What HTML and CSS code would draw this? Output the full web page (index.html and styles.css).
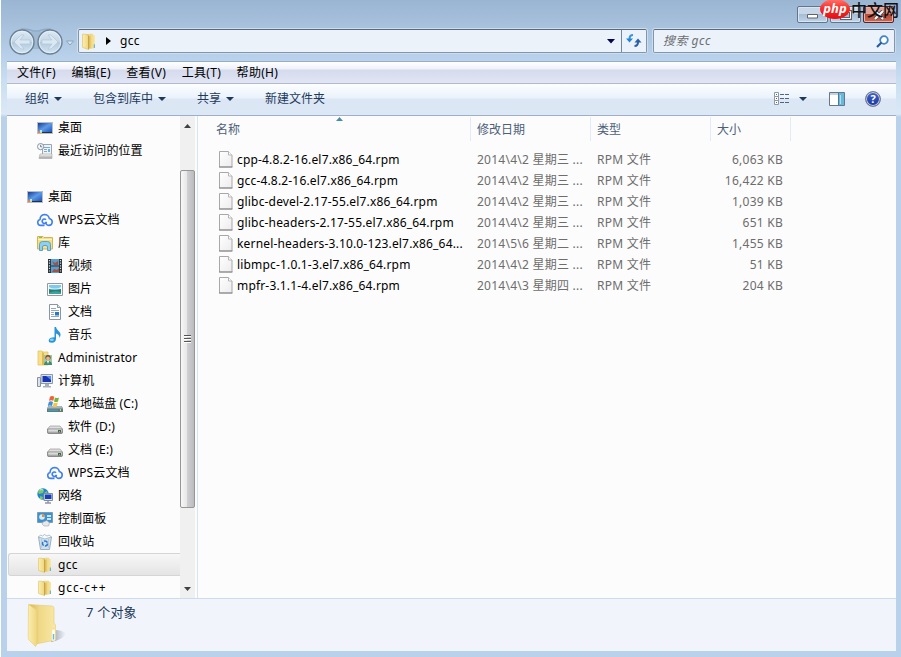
FILE: index.html
```
<!DOCTYPE html>
<html lang="zh-CN">
<head>
    <meta charset="UTF-8">
    <title>gcc</title>
    <link rel="stylesheet" href="styles.css">
</head>
<body>
    <!-- 图标 -->
    <svg class="defs" width="0" height="0">
        <defs>
            <linearGradient id="gold" x1="0" x2="1"><stop offset="0" stop-color="#d9b650"/><stop offset=".4" stop-color="#f0d887"/><stop offset="1" stop-color="#f8e9a6"/></linearGradient>
            <linearGradient id="flap" x1="0" x2="1"><stop offset="0" stop-color="#fbeeb0"/><stop offset="1" stop-color="#efd67e"/></linearGradient>
            <linearGradient id="screen" x1="0" y1="0" x2="1" y2="1"><stop offset="0" stop-color="#143c93"/><stop offset=".5" stop-color="#5d9ae8"/><stop offset="1" stop-color="#1d55ba"/></linearGradient>
            <linearGradient id="glass" x1="0" x2="0" y1="0" y2="1"><stop offset="0" stop-color="#dfeaf3"/><stop offset=".48" stop-color="#c4d6e6"/><stop offset=".52" stop-color="#b3cade"/><stop offset="1" stop-color="#d3e5f3"/></linearGradient>
            <linearGradient id="metal" x1="0" x2="0" y1="0" y2="1"><stop offset="0" stop-color="#fafafa"/><stop offset="1" stop-color="#a0a0a0"/></linearGradient>
            <linearGradient id="paper" x1="0" x2="1" y1="0" y2="1"><stop offset="0" stop-color="#fff"/><stop offset="1" stop-color="#ececec"/></linearGradient>
        </defs>
        <symbol id="desktop" viewBox="0 0 16 16">
            <path d="M0 2h16v12H0z" fill="#b8bec6"/><path d="M1 3h14v9H1z" fill="url(#screen)"/><path d="M5 12h10v1H5z" fill="#27313d"/>
            <path d="M1 11h2v2H1z" fill="#ee7d3e"/><path d="M3 10h2v2H3z" fill="#a9eaff"/><path d="M3 12h2v1H3z" fill="#e7d35f"/>
        </symbol>
        <symbol id="recent" viewBox="0 0 16 16">
            <path d="M5.500 1.500h9v10h-9z" fill="#eef3f7" stroke="#9ba6af"/><path d="M7 4.500h6M7 6.500h3M7 8.500h3" stroke="#82a9c9"/><path d="M11 6h2v3h-2z" fill="#6fb4dd"/>
            <path d="M3 11h12v4.500H2z" fill="url(#metal)" stroke="#aaa" stroke-width=".6"/><circle cx="3.600" cy="3.600" r="3.100" fill="#f7fafc" stroke="#8695a3"/><path d="M3.600 1.800v2h1.600" stroke="#546270" fill="none" stroke-width=".8"/>
        </symbol>
        <symbol id="cloud" viewBox="0 0 16 16">
            <path d="M9.500 9.800A2.200 2.200 0 1 1 9 7.800M7.500 13.400H3.800A3 3 0 0 1 3 7.500Q3.200 3 7.400 2.500q4 0 5 4.100 2.900.9 2.800 3.600-.3 3.200-3.400 3.200-1.600 0-2.600-1.600L8 10.200" fill="none" stroke="#3f80ee" stroke-width="1.600"/>
        </symbol>
        <symbol id="library" viewBox="0 0 16 16">
            <path d="M.500 1.500h5.500l1 1h8.500v11.500H.500z" fill="#f7df87" stroke="#d6b351"/><path d="M2 2h3v1H2z" fill="#7bc25b"/><path d="M1 4.500h14" stroke="#fff3be"/>
            <path d="M2.500 15.500v-6q0-3 3-3h5q3 0 3 3v6h-3V12q0-1.500-1.500-1.500H7q-1.500 0-1.500 1.500v3.500z" fill="#8fd0f0" stroke="#4a9bc8" stroke-width=".9"/>
        </symbol>
        <symbol id="video" viewBox="0 0 16 16">
            <path d="M1 1h14v14H1z" fill="#2c3133"/><path d="M4 1h8v6.500H4zM4 8.500h8V15H4z" fill="#569fd5"/><path d="M5 3l3 2 3-2v4H7zM5 14l2-3 3 1 2-2v4z" fill="#a4513e"/>
            <path d="M2.500 2v13M13.500 2v13" stroke="#d9e0e0" stroke-width="1.200" stroke-dasharray="1.200 1.400"/>
        </symbol>
        <symbol id="picture" viewBox="0 0 16 16">
            <path d="M.5 2.500h15v12H.5z" fill="#fff" stroke="#939a9f"/><path d="M2 4h12v9H2z" fill="#7fc9ec"/><path d="M2 6q6 3 12 0v2H2z" fill="#d8f1f7"/><path d="M2 8q5 2 12 0v5H2z" fill="#2c806f"/><path d="M2 12q6-3 12-.5V13H2z" fill="#3aa5a0"/>
        </symbol>
        <symbol id="document" viewBox="0 0 16 16">
            <path d="M2.500.5h8l3 3v12h-11z" fill="#fff" stroke="#8996a5"/><path d="M10.500.5v3h3" fill="#dce6ef" stroke="#8996a5"/><path d="M4 4.500h5M4 6.500h8M4 8.500h3M4 10.500h3M4 12.500h8" stroke="#93a9c2"/><path d="M8 8h4v3.500H8z" fill="#2878c5"/>
        </symbol>
        <symbol id="music" viewBox="0 0 16 16">
            <path d="M7.500 0H9q.3 2.500 3 4.500 2.800 2.300.5 6.500.2-3.500-3.500-4.500v5.500q-.2 3.500-4.200 3.700-3.400 0-3.100-2.500.4-3 5.800-3z" fill="#2b94d9"/><ellipse cx="4.800" cy="12.800" rx="2" ry="1.300" fill="#86d4fa"/>
        </symbol>
        <symbol id="folder" viewBox="0 0 16 16">
            <path d="M5.500 1.500l6-.5v12.500l-4 .8z" fill="url(#gold)" stroke="#dfc263" stroke-width=".5"/>
            <path d="M1.500 1.200h3.300L7.500 2.500v13L1.500 13.500z" fill="url(#flap)" stroke="#dfc263" stroke-width=".6"/>
            <path d="M7.500 2.500v12.800" stroke="#c6a23e" stroke-width=".9"/>
            <path d="M8 3l3.500-1.500 2.500.5v12l-3.500.8L8 14.500z" fill="url(#gold)"/>
            <path d="M13.300 10.500v3.500" stroke="#58a9d8"/>
        </symbol>
        <symbol id="user" viewBox="0 0 16 16">
            <path d="M1 1h4l1 1h5v13H1z" fill="#f7df87" stroke="#dfbf60" stroke-width=".7"/><path d="M5 2l2 1v12H5z" fill="#ddb955"/>
            <path d="M7 5h8v10H7z" fill="#a4c8a5"/><circle cx="11" cy="7.500" r="2.600" fill="#6b4d34"/><circle cx="11" cy="8.500" r="1.900" fill="#e5b28a"/><path d="M7 15q0-4 4-4t4 4z" fill="#408c70"/><path d="M10 11h2l-1 3z" fill="#fff"/>
        </symbol>
        <symbol id="computer" viewBox="0 0 16 16">
            <path d="M.5 4.500h3v9h-3z" fill="#dde2e9" stroke="#8692a1"/><path d="M4 1.500h11.500v9H4z" fill="#dbe2eb" stroke="#8d99a9"/><path d="M5.500 3h8.500v6H5.500z" fill="#1833b0"/><path d="M9 3h5v4z" fill="#5c89ee"/><path d="M8 11h4v2h2v1.500H6V13h2z" fill="#a6afba"/>
        </symbol>
        <symbol id="sysdisk" viewBox="0 0 16 16">
            <path d="M1.500 10h13l1.500 2.500v3.500H0v-3.500z" fill="#6b7780"/><path d="M1.500 10h13l1.500 2.500H0z" fill="#a6b6c0"/><path d="M1 13.500h10V15H1z" fill="#38a2ae"/><path d="M13 13h1v2h-1z" fill="#8cf75e"/>
            <path d="M3 .8q2-1.500 4.300 0L6.300 4.800q-2-1.300-4.300 0z" fill="#ee6337"/><path d="M8 1.500q2 1 4 0l-1 4q-2 1-4 0z" fill="#72b43f"/><path d="M1.800 6q2-1.300 4.200 0L5 10Q3 9 .8 10z" fill="#448fd6"/><path d="M6.800 6.500q2 1 4 0l-1 4q-2 1-4 0z" fill="#fac642"/>
        </symbol>
        <symbol id="disk" viewBox="0 0 16 16">
            <path d="M3 7h10l2.500 3v3.500q0 1-1 1h-13q-1 0-1-1V10z" fill="#dedede" stroke="#999" stroke-width=".7"/><path d="M.700 10h14.600v3.500q0 .8-.8.8h-13q-.8 0-.8-.8z" fill="url(#metal)" stroke="#777" stroke-width=".8"/><path d="M11 11h3v2.500h-3z" fill="#496049"/><path d="M12 12h1v1h-1z" fill="#52ee50"/>
        </symbol>
        <symbol id="network" viewBox="0 0 16 16">
            <circle cx="6" cy="6" r="5.700" fill="#2482d4"/><path d="M2 2q3-2 5 0L6 5 2 6 1 4zM7 5l3-2 1 4-3 3zM3 8l3 1-1 3-2-1z" fill="#77cb63"/><path d="M3 2q2-1 3 0" stroke="#bde8ff" fill="none"/>
            <path d="M7 5.500h8.500v7H7z" fill="#dce4ef" stroke="#808d9c"/><path d="M8 6.500h6.500V11H8z" fill="#173db9"/><path d="M11 13v2M8 15h6" stroke="#8d98a5" stroke-width="1.400"/>
        </symbol>
        <symbol id="control" viewBox="0 0 16 16">
            <path d="M.5 1.500h15v10H.5z" fill="#3c91cf" stroke="#7b9cb7"/><circle cx="5" cy="6" r="2.800" fill="#d3ecff"/><path d="M5 6V3.200A2.800 2.800 0 0 1 7.800 6z" fill="#f28a29"/><path d="M10 5h4M10 8h4" stroke="#fff" stroke-width="1.300"/><path d="M6 11l4-1.500 2.500 2.500-1 3H7l-2-2z" fill="#e8e8e8" stroke="#9ba3a8" stroke-width=".6"/>
        </symbol>
        <symbol id="recycle" viewBox="0 0 16 16">
            <path d="M1.500 3h13l-2 12.500H3.500z" fill="#cfe0ec" stroke="#8aa1b4" stroke-width=".8"/><path d="M1.500 3l2-2 2 1 2-1.500L10 2l2-1 2.500 2-6.500 2z" fill="#f6fafd" stroke="#94aabb" stroke-width=".7"/><path d="M4.500 5v9M11.500 5v9" stroke="#b4cddd"/>
            <circle cx="8" cy="9.500" r="2.500" fill="none" stroke="#2e78d0" stroke-width="1.500" stroke-dasharray="4 1.200"/>
        </symbol>
        <symbol id="file" viewBox="0 0 14 17">
            <path d="M.5.5h9l3.500 3.500v12H.5z" fill="url(#paper)" stroke="#a8a8a8"/><path d="M9.500.5V4H13" fill="#fff" stroke="#b5b5b5"/><path d="M0 16h13.500" stroke="#858585"/>
        </symbol>
    </svg>

    <div class="window">
        <div class="titlebar">
            <div class="caption">
                <span class="cap-btn"><svg width="12" height="5"><path d="M.5.5h10v3.500H.5z" fill="#fff" stroke="#63616f"/></svg></span>
                <span class="cap-btn"><svg width="12" height="10"><path d="M1.500 1.500h9v7h-9z" fill="none" stroke="#63616f" stroke-width="3"/><path d="M1.500 1.500h9v7h-9z" fill="none" stroke="#fff"/></svg></span>
                <span class="cap-btn close"><svg width="12" height="10"><path d="M2 1l8 8M10 1L2 9" stroke="#6b5156" stroke-width="4"/><path d="M2 1l8 8M10 1L2 9" stroke="#fff" stroke-width="2"/></svg></span>
            </div>
            <div class="watermark">
                <span class="php">php</span><span class="cn">中文网</span>
            </div>
        </div>

        <div class="navbar">
            <svg class="nav-buttons" width="70" height="30" viewBox="0 0 70 30">
                <path d="M14 2q8 0 12 2h6q4-2 12-2" stroke="#8ba9c6" fill="none" stroke-width="1.500"/><path d="M22 5h16v17H22z" fill="#9fb9d2"/>
                <g fill="url(#glass)" stroke="#6c8094" stroke-width="1.400"><circle cx="15" cy="15" r="12"/><circle cx="43" cy="15" r="12"/></g>
                <g fill="none" stroke="#e8f4fc" opacity=".8"><circle cx="15" cy="15" r="10.700"/><circle cx="43" cy="15" r="10.700"/></g>
                <g fill="#dbe8f2" stroke="#b0c7da" stroke-width=".7"><path d="M7 15l7-7h3l-4 5h10v4H13l4 5h-3zM51 15l-7-7h-3l4 5H35v4h10l-4 5h3z"/></g>
                <path d="M59.500 14h7L63 18z" fill="#d9e7f3" stroke="#8ba3bb"/>
            </svg>
            <div class="address">
                <svg width="16" height="17" viewBox="0 0 16 16" preserveAspectRatio="none"><use href="#folder"/></svg>
                <svg class="crumb-arrow" width="5" height="8"><path d="M0 0l5 4-5 4z"/></svg>
                <span class="crumb">gcc</span>
                <svg class="drop" width="8" height="5"><path d="M0 0h8L4 4.500z" fill="#060650"/></svg>
                <span class="refresh">
                    <svg width="16" height="16" viewBox="0 0 16 16"><path d="M7 2Q3.500 2 3.500 6" fill="none" stroke="#3995dc" stroke-width="2"/><path d="M0 5.500h7L3.500 9.500z" fill="#2785d2"/><path d="M8.500 13q3.500 0 3.500-4" fill="none" stroke="#285fab" stroke-width="2"/><path d="M8.500 9.500h7L12 5.500z" fill="#285fab"/></svg>
                </span>
            </div>
            <div class="search">
                <span>搜索 gcc</span>
                <svg width="13" height="13" viewBox="0 0 13 13"><circle cx="8" cy="5" r="3.800" fill="#fff" stroke="#4384c4" stroke-width="1.800"/><path d="M5.500 7.500L1 12" stroke="#2359a5" stroke-width="2.200"/></svg>
            </div>
        </div>

        <div class="client">
            <div class="menubar">
                <span>文件(F)</span>
                <span>编辑(E)</span>
                <span>查看(V)</span>
                <span>工具(T)</span>
                <span>帮助(H)</span>
            </div>

            <div class="toolbar">
                <span class="tool organize">组织 <i class="caret"></i></span>
                <span class="tool include">包含到库中 <i class="caret"></i></span>
                <span class="tool share">共享 <i class="caret"></i></span>
                <span class="tool">新建文件夹</span>
                <div class="views">
                    <svg width="16" height="13" viewBox="0 0 16 13"><g fill="#fff" stroke="#8b99aa"><path d="M.5.500h4v4h-4zM.5 4.500h4v4h-4zM.5 8.500h4v4h-4z"/></g><path d="M2 2h1v1H2zM2 10h1v1H2z" fill="#426eaa"/><path d="M2 6h1v1H2z" fill="#d62b20"/><path d="M6 2.500h4M11 2.500h4M6 6.500h4M11 6.500h4M6 10.500h4M11 10.500h4" stroke="#52657a"/></svg>
                    <i class="caret"></i>
                    <svg class="pane-icon" width="16" height="14" viewBox="0 0 16 14"><path d="M.5.500h15v13H.5z" fill="#fff" stroke="#63778e"/><path d="M1 1h14v2H1z" fill="#c3d3e3"/><path d="M10 1h5v12h-5z" fill="#69b8dc"/><path d="M9.500 1v12" stroke="#577490"/><path d="M11 3h1v9h-1z" fill="#ade2f5"/></svg>
                    <span class="help">?</span>
                </div>
            </div>

            <div class="content">
                <div class="sidebar">
                    <ul class="tree">
                        <li class="l1"><svg><use href="#desktop"/></svg>桌面</li>
                        <li class="l1"><svg><use href="#recent"/></svg>最近访问的位置</li>
                        <li></li>
                        <li class="l0"><svg><use href="#desktop"/></svg>桌面</li>
                        <li class="l1"><svg><use href="#cloud"/></svg>WPS云文档</li>
                        <li class="l1"><svg><use href="#library"/></svg>库</li>
                        <li class="l2"><svg><use href="#video"/></svg>视频</li>
                        <li class="l2"><svg><use href="#picture"/></svg>图片</li>
                        <li class="l2"><svg><use href="#document"/></svg>文档</li>
                        <li class="l2"><svg><use href="#music"/></svg>音乐</li>
                        <li class="l1"><svg><use href="#user"/></svg>Administrator</li>
                        <li class="l1"><svg><use href="#computer"/></svg>计算机</li>
                        <li class="l2"><svg><use href="#sysdisk"/></svg>本地磁盘 (C:)</li>
                        <li class="l2"><svg><use href="#disk"/></svg>软件 (D:)</li>
                        <li class="l2"><svg><use href="#disk"/></svg>文档 (E:)</li>
                        <li class="l2"><svg><use href="#cloud"/></svg>WPS云文档</li>
                        <li class="l1"><svg><use href="#network"/></svg>网络</li>
                        <li class="l1"><svg><use href="#control"/></svg>控制面板</li>
                        <li class="l1"><svg><use href="#recycle"/></svg>回收站</li>
                        <li class="l1 selected"><svg><use href="#folder"/></svg>gcc</li>
                        <li class="l1 wide"><svg><use href="#folder"/></svg>gcc-c++</li>
                    </ul>
                    <div class="scrollbar">
                        <svg width="7" height="4"><path d="M0 4L3.500 0 7 4z" fill="#404040"/></svg>
                        <div class="thumb"><i></i><i></i><i></i></div>
                        <svg width="7" height="4"><path d="M0 0h7L3.500 4z" fill="#404040"/></svg>
                    </div>
                </div>

                <div class="files">
                    <div class="row head">
                        <span class="name">名称</span>
                        <span>修改日期</span>
                        <span>类型</span>
                        <span>大小</span>
                        <svg class="sort" width="7" height="4"><path d="M0 4L3.500 0 7 4z" fill="#4b8ba9"/></svg>
                    </div>
                    <div class="row"><svg><use href="#file"/></svg><span class="name">cpp-4.8.2-16.el7.x86_64.rpm</span><span>2014\4\2 星期三 ...</span><span>RPM 文件</span><span class="size">6,063 KB</span></div>
                    <div class="row"><svg><use href="#file"/></svg><span class="name">gcc-4.8.2-16.el7.x86_64.rpm</span><span>2014\4\2 星期三 ...</span><span>RPM 文件</span><span class="size">16,422 KB</span></div>
                    <div class="row"><svg><use href="#file"/></svg><span class="name">glibc-devel-2.17-55.el7.x86_64.rpm</span><span>2014\4\2 星期三 ...</span><span>RPM 文件</span><span class="size">1,039 KB</span></div>
                    <div class="row"><svg><use href="#file"/></svg><span class="name">glibc-headers-2.17-55.el7.x86_64.rpm</span><span>2014\4\2 星期三 ...</span><span>RPM 文件</span><span class="size">651 KB</span></div>
                    <div class="row"><svg><use href="#file"/></svg><span class="name">kernel-headers-3.10.0-123.el7.x86_64...</span><span>2014\5\6 星期二 ...</span><span>RPM 文件</span><span class="size">1,455 KB</span></div>
                    <div class="row"><svg><use href="#file"/></svg><span class="name">libmpc-1.0.1-3.el7.x86_64.rpm</span><span>2014\4\2 星期三 ...</span><span>RPM 文件</span><span class="size">51 KB</span></div>
                    <div class="row"><svg><use href="#file"/></svg><span class="name">mpfr-3.1.1-4.el7.x86_64.rpm</span><span>2014\4\3 星期四 ...</span><span>RPM 文件</span><span class="size">204 KB</span></div>
                </div>
            </div>

            <div class="details">
                <svg width="44" height="46" viewBox="0 0 44 46">
                    <defs>
                        <linearGradient id="shade"><stop offset="0" stop-color="#6c7582" stop-opacity=".7"/><stop offset="1" stop-color="#808995" stop-opacity="0"/></linearGradient>
                    </defs>
                    <path d="M24 39l4-12q8 0 11 4-4 6-15 8z" fill="url(#shade)"/>
                    <path d="M2 1.500L25 3q2 .3 2 2v15l1.500 2v15L9 41z" fill="url(#gold)" stroke="#e5ca75" stroke-width=".6"/>
                    <path d="M1.500 1.500L9 6.500q1 .8 1 2V41l-1.500 2.500L2 37q-.8-1-.8-2.500z" fill="url(#flap)" stroke="#e6cd73" stroke-width=".6"/>
                    <path d="M25 25h3.500v12L25 38z" fill="#f4df93"/>
                    <path d="M26.500 26.500v11" stroke="#fff" stroke-width="2.600"/><path d="M26.500 31v5.500" stroke="#64bce9" stroke-width="1.400"/>
                </svg>
                <span>7 个对象</span>
            </div>
        </div>
    </div>
</body>
</html>
```
FILE: styles.css
```
* {
    box-sizing: border-box;
}

body {
    margin: 0;
    font-family: 'Noto Sans', 'Noto Sans CJK SC', sans-serif;
    font-size: 12px;
    line-height: 18px;
    color: #000;
    background: #fff;
    overflow: hidden;
}

svg {
    display: block;
    flex: none;
}

.defs {
    position: absolute;
}

.window {
    width: 900px;
    height: 657px;
    margin-left: 1px;
    padding: 0 5px 6px 6px;
    display: flex;
    flex-direction: column;
    background: linear-gradient(#9ab5d2 0, #b9d1ea 58px, #c9def2 80px, #dbe9f6 114px, #b9d1ea 117px);
}

/* 标题栏 */
.titlebar {
    height: 28px;
    position: relative;
}

.caption {
    display: flex;
    justify-content: flex-end;
    gap: 2px;
    padding: 6px 2px 0 0;
}

.cap-btn {
    width: 31px;
    height: 17px;
    display: flex;
    align-items: center;
    justify-content: center;
    border: 1px solid #62758b;
    border-radius: 2px;
    background: linear-gradient(#c7d7e7 45%, #a5bdd5 50%, #c0d5e9);
    box-shadow: inset 0 0 0 1px #d9e6f1;
}

.cap-btn:first-child {
    padding-top: 3px;
}

.close {
    border-color: #56242b;
    background: linear-gradient(#dea196 45%, #b84838 50%, #c96a51);
    box-shadow: inset 0 0 0 1px #e7b1a6;
}

.watermark {
    position: absolute;
    top: -1px;
    left: 813px;
    display: flex;
    align-items: center;
    white-space: nowrap;
}

.php {
    width: 30px;
    height: 20px;
    border-radius: 50%;
    background: linear-gradient(#ff7770, #f72f2b 45%, #e50e13);
    color: #fff;
    font: italic bold 13px/18px 'Open Sans', sans-serif;
    text-align: center;
}

.cn {
    margin-left: 1px;
    font: 500 16px/20px 'Noto Sans CJK SC', sans-serif;
    color: #111;
}

/* 地址栏 */
.navbar {
    height: 33px;
    display: flex;
    align-items: flex-start;
}

.nav-buttons {
    margin: -1px 1px 0 0;
}

.address,
.search {
    height: 24px;
    display: flex;
    align-items: center;
    border: 1px solid #8196ad;
    border-top-color: #59697c;
    border-radius: 2px;
    background: #ebf2fa;
    box-shadow: 0 0 0 1px #cbddee;
}

.address {
    width: 569px;
    padding-left: 2px;
    margin-top: 1px;
}

.crumb-arrow {
    margin: 0 9px 0 9px;
}

.crumb {
    letter-spacing: 0.3px;
}

.drop {
    margin: 1px 6px 0 auto;
}

.refresh {
    width: 25px;
    height: 22px;
    padding: 3px 4px;
    border-left: 1px solid #74869b;
}

.search {
    width: 242px;
    margin: 1px 0 0 6px;
    padding: 0 5px 0 9px;
    justify-content: space-between;
    color: #6b6e72;
    font-style: italic;
    letter-spacing: 0.5px;
}

/* 窗口主体 */
.client {
    flex: 1;
    min-height: 0;
    display: flex;
    flex-direction: column;
}

.menubar {
    height: 23px;
    padding: 2px 0 0 10px;
    display: flex;
    gap: 15.500px;
    letter-spacing: 0.300px;
    border-top: 1px solid #98adc5;
    border-bottom: 1px solid #b2b9cc;
    background: linear-gradient(#fff 0, #eef1f8 7px, #d5dbed 8px, #e1e5f5 21px);
}

.toolbar {
    height: 32px;
    padding: 0 15px 2px 18px;
    display: flex;
    align-items: center;
    color: #1e395b;
    border-bottom: 1px solid #a0afc3;
    background: linear-gradient(#fdfeff 0, #e9f2fb 14px, #dce6f4 15px, #dce8f5 30px);
}

.tool {
    display: flex;
    align-items: center;
    gap: 5px;
    margin-right: 31px;
}

.tool:nth-child(2) {
    margin-right: 31px;
}

.caret {
    border: 4px solid transparent;
    border-top-color: #1e395b;
    border-bottom: 0;
}

.views {
    margin-left: auto;
    display: flex;
    align-items: center;
}

.views .caret {
    margin-left: 9px;
}

.pane-icon {
    margin: 0 20px 0 22px;
}

.help {
    width: 16px;
    height: 16px;
    border: 1px solid #77798a;
    border-radius: 50%;
    box-shadow: inset 0 0 0 1px #c5cbe2;
    background: linear-gradient(#4167c4, #1937a2);
    color: #fff;
    font: bold 11px/14px 'Noto Sans', sans-serif;
    text-align: center;
}

.content {
    height: 482px;
    display: flex;
    background: #fcfcfc;
}

/* 左侧导航树 */
.sidebar {
    width: 191px;
    display: flex;
    border-right: 1px solid #d6e5f5;
    overflow: hidden;
}

.tree {
    width: 173px;
    margin: 0;
    padding: 0;
    list-style: none;
    letter-spacing: 0.100px;
}

.tree li {
    height: 23px;
    display: flex;
    align-items: center;
    gap: 5px;
    white-space: nowrap;
}

.tree svg {
    width: 16px;
    height: 16px;
}

.tree .l0 {
    padding-left: 20px;
}

.tree .l1 {
    padding-left: 30px;
}

.tree .l2 {
    padding-left: 40px;
}

.tree .selected {
    margin-left: 1px;
    padding-left: 28px;
    letter-spacing: 0.300px;
    border: 1px solid #d5d5d5;
    border-right: 0;
    border-radius: 3px 0 0 3px;
    background: linear-gradient(#f7f7f7, #e4e4e4);
}

.tree .wide {
    letter-spacing: 0.900px;
}

.scrollbar {
    width: 15px;
    padding: 8px 0 7px;
    display: flex;
    flex-direction: column;
    align-items: center;
    background: #f0f0f0;
}

.thumb {
    width: 15px;
    height: 338px;
    margin: 42px 0 auto;
    display: flex;
    flex-direction: column;
    justify-content: center;
    align-items: center;
    gap: 1px;
    border: 1px solid #969696;
    border-radius: 2px;
    background: linear-gradient(90deg, #f7f7f7, #e7e7e7 45%, #cfcfd2 50%, #bcbcc0);
}

.thumb i {
    width: 7px;
    height: 2px;
    border-top: 1px solid #555;
    background: #fff;
}

/* 文件列表 */
.files {
    flex: 1;
}

.row {
    height: 21px;
    padding-left: 21px;
    display: flex;
    align-items: center;
    color: #6d6d6d;
    letter-spacing: 0.250px;
    white-space: nowrap;
}

.row svg {
    width: 14px;
    height: 17px;
    margin-right: 4px;
}

.row span {
    width: 120px;
}

.row .name {
    width: 240px;
    color: #000;
    letter-spacing: 0.170px;
}

.row .size {
    width: 66px;
    text-align: right;
}

.head {
    height: 33px;
    padding: 0 0 7px 18px;
    position: relative;
    color: #4c607a;
    letter-spacing: 0;
}

.head span {
    height: 24px;
    padding-top: 4px;
    border-right: 1px solid #e0ebf7;
    padding-left: 6px;
}

.head .name {
    width: 255px;
    padding-left: 0;
    color: #4c607a;
    letter-spacing: 0;
}

.head span:nth-child(4) {
    width: 80px;
}

.row .sort {
    position: absolute;
    top: 1px;
    left: 138px;
    width: 7px;
    height: 4px;
}

/* 底部状态 */
.details {
    flex: 1;
    padding: 4px 0 0 20px;
    display: flex;
    gap: 15px;
    color: #1e395b;
    font-size: 13px;
    letter-spacing: 0.200px;
    border-top: 1px solid #cddbea;
    background: #f1f5fb;
}
```
